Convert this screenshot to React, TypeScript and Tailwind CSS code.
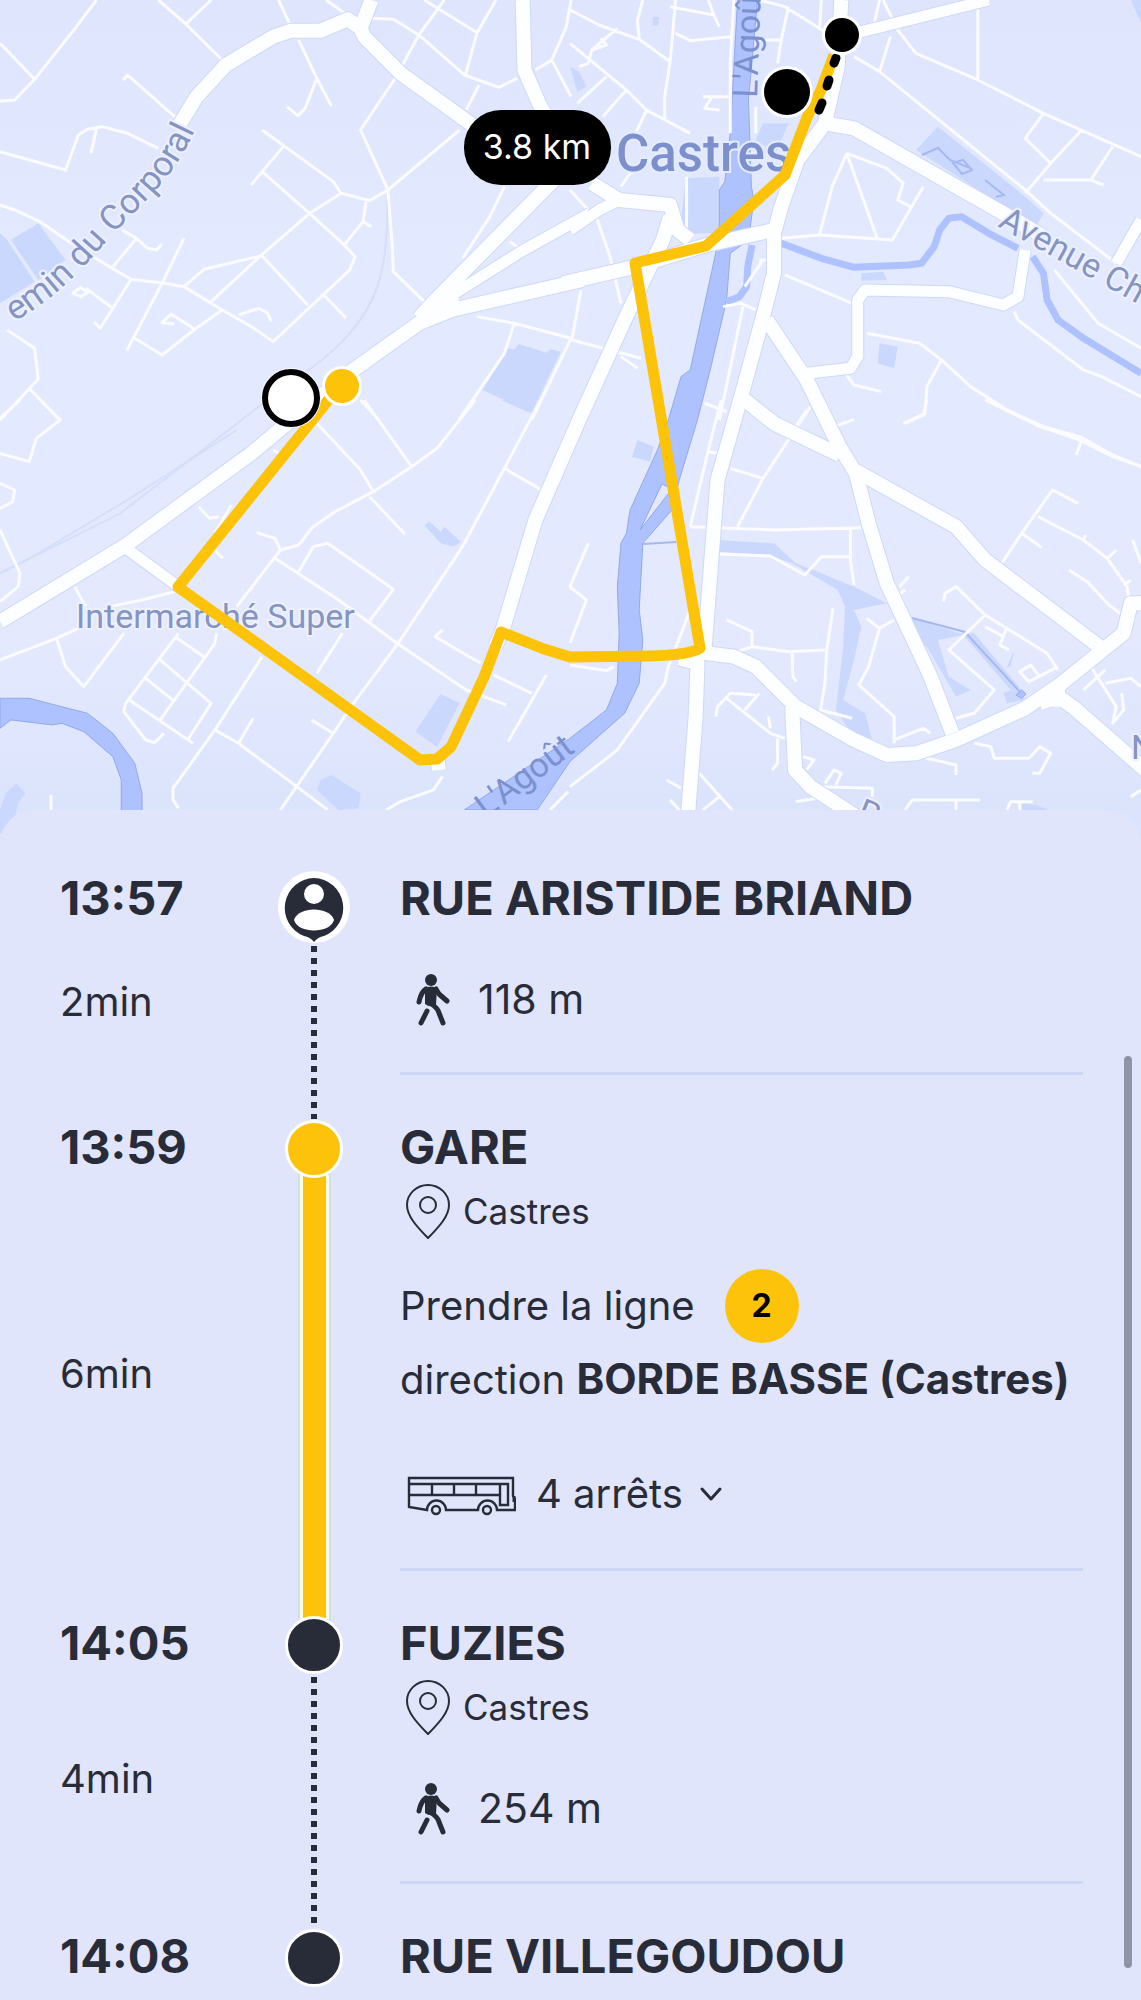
import { useState, type ReactNode } from "react";

type Tile = {
  transform: string;
  parks: string;
  water: string;
  streams: string;
  rail: string;
  minor: string;
  medium: string;
  major: string;
};

type Step = {
  time: string;
  duration?: string;
  name: string;
  marker: "person" | "line" | "dark";
  segment?: "walk" | "ride";
  children?: ReactNode;
};

const TILES: Tile[] = [
  {
    transform: "translate(0 0) scale(0.3642 0.3333)",
    parks:
      "M30 720L105 670 180 780 105 840ZM0 700L18 718 95 845 0 910ZM1395 1045L1412 1048 1425 1032 1500 1058 1512 1048 1540 1055 1460 1238 1325 1170Z",
    water: "",
    streams: "",
    rail: "M1063 600C1066 800 1040 900 960 1000S800 1140 640 1280L330 1540 0 1720",
    minor:
      "M265 0L210 80 95 238 40 300 0 303M0 130L95 238M435 0L510 72 610 180M580 0L510 72M765 0L795 70M820 120L870 235 910 318M870 235L838 325 818 347 788 320M895 0L945 38M1020 55L1080 58 1150 105 1275 225 1370 262 1420 235M1220 0L1150 105 1085 235 990 390 1065 570 1078 750 1080 815 1165 905M1165 0L1310 98 1362 0M1310 98L1278 225M1315 255L1280 330M1470 210L1515 180 1568 290M1515 180L1555 80 1568 0M1262 390L1065 570 1015 602 937 580 915 545 720 390M780 437L720 515 690 555M720 515L850 640 945 735 975 770 960 810 750 1025 690 980 610 930 505 860 450 850 360 838 300 800 190 725 110 665 40 630 0 615M937 580L850 640 715 768 580 905M715 768L560 808 505 860M720 768L845 915M885 880L950 955M1005 605L997 665 945 735M997 665L1020 680M338 240L350 225 485 355M0 455L180 510 215 405 240 388 280 380 350 400 435 445M265 385L250 460M335 690L375 715 405 745 430 750 445 732M375 715L310 800M505 715L445 850 348 1052M360 838L310 925 275 985 258 965M235 865L310 925M200 880L222 862 240 878 222 890ZM610 930L535 988 445 1065 370 1015M535 988L470 942 445 968 478 972M655 945L710 925 735 940 745 965M20 990L95 1045 105 1138 0 1260M80 1165L165 1260M1385 560L1345 650 1270 775M1400 725L1425 745M1310 950L1412 970 1568 1015M1412 970L1385 1060 1260 1260M1568 1015L1460 1260M990 1200L1040 1260",
    medium: "M1620 640L1430 755 1220 900",
    major:
      "M490 380L540 290 620 195 750 110 800 92 880 92 955 58 990 85M1020 0L990 85 1000 110 1100 220 1310 385M1435 0L1440 210 1480 310 1510 370M1530 530L1200 895 1150 955M1600 840L1240 930 1150 970 970 1110 800 1260 690 1360 340 1640 0 1865M1195 915L1260 915",
  },
  {
    transform: "translate(570 0) scale(0.3642 0.3333)",
    parks:
      "M318 535L410 530 410 700 330 700 305 660ZM1010 380L1250 590 1300 640 1280 680 950 450ZM850 1030L900 1040 890 1105 845 1090ZM530 370L600 370 565 460 510 420ZM0 200L25 215 45 260 20 275ZM800 820L860 815 870 840 800 842ZM228 50L245 52 242 78 226 76ZM1540 0L1568 0 1568 70Z",
    water:
      "M460 0L515 0 490 300 498 560 505 600 490 720 440 760 430 900 385 1110 350 1260 300 1440 280 1530 200 1630 190 1830 200 1920 190 2050 150 2140 0 2285-90 2430-290 2430 0 2215 100 2130 130 2050 135 1900 130 1760 140 1630 155 1600 165 1530 240 1350 270 1260 305 1130 330 1110 400 760 410 700 410 570 425 545 440 400Z",
    streams:
      "M580 730L690 775 780 802 930 795 965 790 1000 740 1015 690 1040 655 1075 650 1150 700 1230 745M1270 770L1300 820 1310 900 1340 960 1410 1015 1568 1120M500 735L488 800 485 860 465 890 430 905",
    rail: "",
    minor:
      "M0 30L80 75 190 118 275 185M190 118L185 60 200 0M130 85L60 150 50 190 25 200M60 150L100 135 85 115M0 130L155 270 210 330 330 400M275 185L290 0M275 185L260 290 260 360M155 270L90 350M100 230L20 310M275 20L395 45M380 0L395 45 410 80M290 100L330 122 440 110M450 0L440 190 440 400M520 0L590 20 700 95M600 20L580 120 520 120M580 120L570 190M365 290L440 290M390 290L370 325 410 330M510 320L510 400M210 330L180 400M320 530L320 700M0 570L75 660 110 770 140 910M140 560L165 520 240 470M30 870L5 1020 195 1075M140 1070L185 1105M690 0L685 90M850 0L830 95M860 0L900 90 950 160 1120 240 1300 340 1568 470M1120 0L1120 240M880 110L850 215M780 170L850 215 1250 570 1320 640 1500 790M1300 340L1250 415 1320 490 1250 580M1405 390L1320 490M1490 440L1430 540 1300 540M1430 540L1465 555M760 460L720 560 685 705 580 715M760 460L845 720M685 705L885 720 970 560M760 460L870 505 915 550 900 600 935 620M530 780L480 860M520 780L545 780M590 825L775 910M420 920L470 910 510 930M475 920L410 1260M1330 810L1450 970 1568 1045M1220 935L1230 960 1410 1110 1460 1130 1568 1190M815 1000L960 1030 1020 1080 1100 1160 1200 1230 1300 1280 1400 1310 1490 1365 1568 1400M1020 1080L980 1160 975 1240 920 1270M755 1120L780 1155 855 1175M370 1210L430 1235M650 1230L620 1280",
    medium:
      "M745 110L1150 0M650 1120L770 1105 790 1070 790 900 810 870 1040 875 1190 915 1230 890 1250 750M1500 790L1568 660M0 690L80 630 135 600",
    major:
      "M745 0L735 200 700 370 625 480 580 620 560 700 560 820 530 950 475 1170 405 1440 370 1940M700 370L780 385 1190 640 1300 710M-20 850L180 800 375 735 560 690M60 550L135 600 275 615 295 690 330 720M275 650L255 720 150 960 25 1260-95 1560-185 1890M540 960L650 1140 740 1340",
  },
  {
    transform: "translate(0 400) scale(0.3642 0.3333)",
    parks:
      "M1210 882L1262 910 1200 1040 1140 995ZM880 1140L910 1125 990 1180 985 1225 930 1230 870 1170ZM1165 375L1180 365 1210 395 1220 380 1265 425 1245 440 1210 430ZM1375 0L1470 0 1455 38ZM15 1180L45 1150 70 1180 50 1210 30 1300 0 1300 0 1230Z",
    water:
      "M0 895L80 895 240 940 310 1000 370 1090 390 1180 390 1300 333 1300 333 1140 310 1070 230 995 170 970 145 975 30 960 0 985Z",
    streams: "",
    rail: "M650 90L350 300 90 470 0 520",
    minor:
      "M110 0L165 60 100 115 80 185 0 160M55 0L0 55M0 250L40 270 35 305 0 325M0 390L55 520 50 560 0 605M1000 0L1130 200M870 70L990 210 1025 275 920 335 860 380 820 435 770 450 755 415 705 398M1025 275L1130 200 1200 145 1305 0M1015 290L1112 403M1485 0L1385 205 1270 440 1090 735 970 910 915 1000 770 1230M1385 205L1490 272M770 450L650 620M755 475L930 600 1090 730 1280 870 1390 915M820 515L860 440 900 430 1080 568 1010 670M940 700L870 820M205 560L235 620M545 320L575 355 600 350M635 315L590 400M580 440L612 475M750 150L765 160M300 620L390 600 480 575M0 780L155 715 215 685M155 715L180 800 230 860 340 700M490 700L345 910 340 935 400 1020 425 1028 450 1000M595 700L590 730 440 960M480 710L560 770M435 775L515 850 580 910 515 1020M400 835L480 905M355 900L530 1030M720 770L590 990 475 1165 475 1200 490 1225M590 990L655 1030 815 1160 900 1230M655 1030L695 955M855 960L915 1000M1215 690L1195 710 1280 765 1320 790M1355 825L1460 880M1500 825L1395 1025M1215 1130L1190 1170 1100 1205 1060 1230M140 1185L140 1230M1560 1175L1510 1230M1568 555L1568 570",
    medium: "M340 440L490 560",
    major: "M1380 690L1360 740M1200 1060L1205 1110",
  },
  {
    transform: "translate(570 400) scale(0.3642 0.3333)",
    parks:
      "M410 420L560 430 620 490 680 515 780 560 870 610 780 630 800 680 780 780 750 900 810 940 830 1020 780 1010 730 930 750 740 755 620 735 570 610 490 540 465 410 455ZM940 655L1070 700 1110 700 1240 870 1250 900 1200 910 1190 880 1210 870 1080 705 1010 720 1040 830 1100 870 1060 890 980 740 940 700ZM185 120L230 140 220 185 170 170ZM1220 750L1200 800 1210 800ZM1240 1210L1280 1215 1335 1240 1240 1240Z",
    water: "M1225 885L1240 870 1252 882 1240 895Z",
    streams: "",
    rail: "",
    minor:
      "M415 0L380 150 330 380M370 10L430 35M380 155L405 160M660 20L530 235 460 380M440 205L530 235M330 380L560 390 800 383M770 385L770 480 780 555M410 462L550 468 645 525 690 470 770 470M725 80L780 58M915 70L970 45 980 0M1140 0L1290 80 1400 120 1490 170 1568 200M1405 120L1390 165M1185 490L1240 400 1325 270 1395 310M1285 350L1410 420 1475 475 1530 560 1535 610M1240 400L1295 443M1410 420L1415 405M1475 475L1500 450M1520 555L1540 540M1545 420L1568 490M1370 510L1420 545 1480 615 1510 640M50 430L0 560 45 600 0 730M330 630L270 800 260 850 130 1050 0 1160M0 795L100 812 120 800M430 660L500 695 500 740 460 755M500 740L600 755 700 750M610 760L612 830 622 845M722 625L705 750 700 850 688 930 775 955M815 655L850 685 890 660M850 685L820 800 793 855 890 950 890 1030M890 1020L970 985 990 1000M905 560L930 530M900 585L920 570M1025 605L1030 580 1060 560 1140 645 1310 760 1340 810M1140 645L1040 750 1165 870 1110 940 1060 955M1140 680L1190 710 1200 680M1190 710L1180 735 1205 750M1340 800L1260 845 1235 815 1265 795 1290 830M1410 870L1470 810M1430 800L1500 920 1490 970 1520 930 1515 880M1470 850L1540 835 1568 860M400 950L405 920 440 880 510 885M430 895L550 1000 590 1015M520 880L480 930M545 950L550 985M570 1015L570 1090 555 1110M355 1120L445 1230M410 1190L365 1230M265 1140L305 1165M275 1200L300 1230M640 1070L670 1080 650 1110M690 1160L830 1165 830 1190M700 1150L725 1110 745 1120 730 1155M920 1060L1060 1095 1060 1125M1110 1030L1155 1040 1165 1075 1260 1075 1290 1040 1320 1060 1290 1120 1270 1120M920 1230L940 1200 1125 1200M1060 1200L1060 1230M1200 1230L1210 1205 1270 1205M1235 1210L1235 1230M620 1205L680 1195M1568 1170L1540 1190",
    medium: "",
    major:
      "M740 140L785 220 820 370 870 550 990 830 1050 1000M480 0L560 70 740 165M780 210L1060 380 1140 480 1460 745M340 755L450 770 510 800 620 920 780 1020 870 1065 950 1060 1060 1020 1250 925 1350 850 1520 700 1540 610 1600 610M300 775L350 790 345 950 320 1300M610 920L618 1110 660 1160 800 1260M1290 910L1340 890 1380 920 1600 1130M1340 850L1340 920",
  },
];

const ROUTE =
  "M330 398L178 587 240 631 420 760 437 759 451 747 484 677 501 632 544 649 570 657 650 656Q690 655 700 648L635 263 706 246 785 175 808 115 821 90 834 55";

type Layer = Exclude<keyof Tile, "transform">;

function TileLayer({ layer, fill, stroke, width }: { layer: Layer; fill?: string; stroke?: string; width?: number }) {
  return (
    <g fill={fill ?? "none"} stroke={stroke ?? "none"} strokeWidth={width} strokeLinejoin="round" strokeLinecap="butt">
      {TILES.map((tile) => (
        <path key={tile.transform} d={tile[layer]} transform={tile.transform} vectorEffect="non-scaling-stroke" />
      ))}
    </g>
  );
}

function RouteMap() {
  return (
    <svg
      viewBox="0 0 1141 844"
      preserveAspectRatio="xMidYMin slice"
      className="block h-[844px] w-full font-[Roboto,sans-serif]"
      role="img"
      aria-label="Carte de l'itinéraire"
    >
      <defs>
        <linearGradient id="land" x1="0" y1="0" x2="0" y2="1">
          <stop offset="0" stopColor="#dee5fd" />
          <stop offset="0.3" stopColor="#e3e9fe" />
          <stop offset="0.75" stopColor="#e4e9fe" />
          <stop offset="1" stopColor="#dae3fc" />
        </linearGradient>
        <path id="corporal" d="M0 330C70 292 85 262 125 222S177 168 195 130" />
      </defs>
      <rect width="1141" height="844" fill="url(#land)" />
      <TileLayer layer="parks" fill="#cbd8fd" />
      <TileLayer layer="rail" stroke="#d5dff9" width={2} />
      <TileLayer layer="water" fill="#adc2fe" stroke="#93aae6" width={1} />
      <TileLayer layer="streams" stroke="#adc2fe" width={7} />
      <path d="M640 530L672 489 662 484Z" fill="#e4e9fe" stroke="#8fa7e6" />
      <path
        d="M922 155L938 148 950 160 970 168M953 163L963 160 972 170 962 174ZM985 180L1004 195 996 197M912 618L965 632 1020 692M643 544L676 542"
        fill="none"
        stroke="#a4b8f2"
        strokeWidth="2"
      />
      <TileLayer layer="minor" stroke="#fbfcff" width={3} />
      <TileLayer layer="medium" stroke="#ced9f6" width={13} />
      <TileLayer layer="major" stroke="#ced9f6" width={16} />
      <TileLayer layer="medium" stroke="#fdfeff" width={11} />
      <TileLayer layer="major" stroke="#fdfeff" width={14} />

      <g fill="#8594c2" stroke="#edf1ff" strokeWidth="4" paintOrder="stroke" strokeLinejoin="round">
        <text fontSize="35" textAnchor="end">
          <textPath href="#corporal" startOffset="100%">emin du Corporal</textPath>
        </text>
        <text fontSize="34" transform="translate(997 226) rotate(29)">Avenue Ch</text>
        <text x="76" y="628" fontSize="34">Intermarché Super</text>
        <text x="1131" y="759" fontSize="34">N</text>
        <text fontSize="34" transform="translate(855 820) rotate(22)">R</text>
      </g>
      <g fill="#7b90cf">
        <text fontSize="34" transform="translate(757 98) rotate(-88)">L'Agoû</text>
        <text fontSize="34" transform="translate(486 819) rotate(-37)">L'Agoût</text>
      </g>
      <text
        x="616"
        y="171"
        fontSize="51"
        fontWeight="500"
        fill="#7b90cc"
        stroke="#e6ecff"
        strokeWidth="4"
        paintOrder="stroke"
      >
        Castres
      </text>

      <path d={ROUTE} fill="none" stroke="#fcc308" strokeWidth="11" strokeLinejoin="round" />
      <path d="M836 58L834 63M829 80L827 86M822 103L819 110" stroke="#000" strokeWidth="9" strokeLinecap="round" />

      <circle cx="842" cy="35" r="20" fill="#fff" />
      <circle cx="842" cy="35" r="17" />
      <circle cx="787" cy="92" r="26" fill="#fff" />
      <circle cx="787" cy="92" r="23" />
      <circle cx="342" cy="386" r="20" fill="#fff" />
      <circle cx="342" cy="386" r="17" fill="#fcc308" />
      <circle cx="291" cy="398" r="30" fill="#f4f7ff" />
      <circle cx="291" cy="398" r="26" fill="#fff" stroke="#000" strokeWidth="6" />

      <rect x="464" y="110" width="147" height="75" rx="37" />
      <text x="537" y="159" fontSize="34" fill="#fff" textAnchor="middle" className="font-[Inter,sans-serif]">
        3.8 km
      </text>
    </svg>
  );
}

function WalkIcon() {
  return (
    <svg viewBox="0 0 34 52" className="h-[52px] w-[34px]" aria-hidden="true">
      <circle cx="15" cy="6" r="6" fill="currentColor" />
      <path d="M9 14Q15 11 21 14L20 31Q14 34 9 30Z" fill="currentColor" />
      <path
        d="M10 15Q5 18 3 28M20 15L23 20 31 27M11 37L5 49M14 29Q22 34 23 39L27 49"
        fill="none"
        stroke="currentColor"
        strokeWidth="5"
        strokeLinecap="round"
        strokeLinejoin="round"
      />
    </svg>
  );
}

function PinIcon() {
  return (
    <svg viewBox="0 0 46 56" className="h-14 w-[46px]" fill="none" stroke="currentColor" strokeWidth="2" aria-hidden="true">
      <path d="M23 55C12 44 2 33 2 22A21 20 0 0 1 44 22C44 33 34 44 23 55Z" strokeLinejoin="round" />
      <circle cx="23" cy="22" r="8" />
    </svg>
  );
}

function BusIcon() {
  return (
    <svg
      viewBox="0 0 109 40"
      className="mt-1 h-10 w-[109px]"
      fill="none"
      stroke="currentColor"
      strokeWidth="2.4"
      aria-hidden="true"
    >
      <path d="M20 34L2 31V2H106V20L108 23V34H90A9 9 0 0 0 71 34H39A9 9 0 0 0 20 34Z" />
      <path d="M2 8H101V29H93V8M2 19H93M25 8V19M47 8V19M69 8V19" />
      <circle cx="29" cy="34" r="4" />
      <circle cx="80" cy="34" r="4" />
      <path d="M107 20V26" strokeWidth="3" />
    </svg>
  );
}

function PersonMarker() {
  return (
    <svg viewBox="0 0 72 74" className="h-[74px] w-[72px]" aria-hidden="true">
      <circle cx="36" cy="37" r="36" fill="#fff" />
      <path d="M36 8A30 30 0 0 1 46 66Q40 67 36 72Q32 67 26 66A30 30 0 0 1 36 8Z" fill="#282c38" />
      <circle cx="36" cy="24" r="10" fill="#fff" />
      <path d="M16 50C20 36 52 36 56 50C52 64 20 64 16 50Z" fill="#fff" />
    </svg>
  );
}

function Marker({ kind }: { kind: Step["marker"] }) {
  if (kind === "person") {
    return <PersonMarker />;
  }
  return (
    <span className="relative z-10 flex h-[60px] items-center">
      <span
        className={`h-[58px] w-[58px] rounded-full border-3 border-white ${kind === "line" ? "bg-[#fdc30a]" : "bg-[#282c38]"}`}
      />
    </span>
  );
}

function Segment({ kind }: { kind?: Step["segment"] }) {
  if (kind === "walk") {
    return (
      <span className="mt-[2px] w-[6px] flex-1 bg-[repeating-linear-gradient(to_bottom,#282c38_0_6px,transparent_6px_12px)]" />
    );
  }
  if (kind === "ride") {
    return (
      <span className="-my-1 w-[29px] flex-1 border-x-3 border-[#fbfcea] bg-[#fdc30a] ring-2 ring-[#cfe2e6]" />
    );
  }
  return null;
}

function StepRow({ step }: { step: Step }) {
  return (
    <li className="flex">
      <div className="flex w-[218px] flex-col">
        <time className="text-[47px] leading-14 font-bold">{step.time}</time>
        {step.duration ? (
          <>
            <span className="flex flex-1 items-center text-[40px]">{step.duration}</span>
            <span className="h-[42px]" />
          </>
        ) : null}
      </div>
      <div className="flex w-[72px] flex-col items-center">
        <Marker kind={step.marker} />
        <Segment kind={step.segment} />
      </div>
      <div className="ml-[50px] flex-1">
        <h2 className="text-[47px] leading-14 font-bold whitespace-nowrap">{step.name}</h2>
        {step.children ? <div className="mb-11 border-b-3 border-[#cbd7f5]">{step.children}</div> : null}
      </div>
    </li>
  );
}

function City({ name }: { name: string }) {
  return (
    <p className="mt-2 flex h-14 items-center gap-3 pl-[5px] text-[35px]">
      <PinIcon />
      {name}
    </p>
  );
}

function Walk({ distance }: { distance: string }) {
  return (
    <p className="mt-[46px] mb-11 flex h-14 items-center gap-7 pl-4 text-[41px]">
      <WalkIcon />
      {distance}
    </p>
  );
}

function Stops() {
  const [open, setOpen] = useState(false);

  return (
    <button
      type="button"
      aria-expanded={open}
      onClick={() => setOpen(!open)}
      className="mt-[50px] mb-[46px] flex h-14 items-center pl-[7px] text-[40px]"
    >
      <BusIcon />
      <span className="ml-5">4 arrêts</span>
      <svg
        viewBox="0 0 24 16"
        className={`ml-4 h-4 w-6 ${open ? "rotate-180" : ""}`}
        fill="none"
        stroke="currentColor"
        strokeWidth="3"
        strokeLinecap="round"
        strokeLinejoin="round"
        aria-hidden="true"
      >
        <path d="M3 3L12 13 21 3" />
      </svg>
    </button>
  );
}

const STEPS: Step[] = [
  {
    time: "13:57",
    duration: "2min",
    name: "RUE ARISTIDE BRIAND",
    marker: "person",
    segment: "walk",
    children: <Walk distance="118 m" />,
  },
  {
    time: "13:59",
    duration: "6min",
    name: "GARE",
    marker: "line",
    segment: "ride",
    children: (
      <>
        <City name="Castres" />
        <p className="mt-[30px] flex items-center gap-[30px] text-[40px]">
          Prendre la ligne
          <span className="flex h-[74px] w-[74px] items-center justify-center rounded-full bg-[#fdc30a] text-[32px] font-bold text-black">
            2
          </span>
        </p>
        <p className="text-[40px] leading-[72px] whitespace-nowrap">
          direction <strong className="text-[42px] font-bold">BORDE BASSE (Castres)</strong>
        </p>
        <Stops />
      </>
    ),
  },
  {
    time: "14:05",
    duration: "4min",
    name: "FUZIES",
    marker: "dark",
    segment: "walk",
    children: (
      <>
        <City name="Castres" />
        <Walk distance="254 m" />
      </>
    ),
  },
  { time: "14:08", name: "RUE VILLEGOUDOU", marker: "dark" },
];

export default function App() {
  return (
    <main className="bg-[#e0e5fb] font-[Inter,sans-serif] text-[#282c38]">
      <RouteMap />
      <section className="relative -mt-[34px] rounded-t-[34px] bg-[#e0e5fb] pt-[60px] pr-[58px] pb-4 pl-[60px]">
        <ol>
          {STEPS.map((step) => (
            <StepRow key={step.time} step={step} />
          ))}
        </ol>
        <div className="absolute top-[246px] right-[9px] bottom-9 w-2 rounded-full bg-[#8f95a4]" aria-hidden="true" />
      </section>
    </main>
  );
}
